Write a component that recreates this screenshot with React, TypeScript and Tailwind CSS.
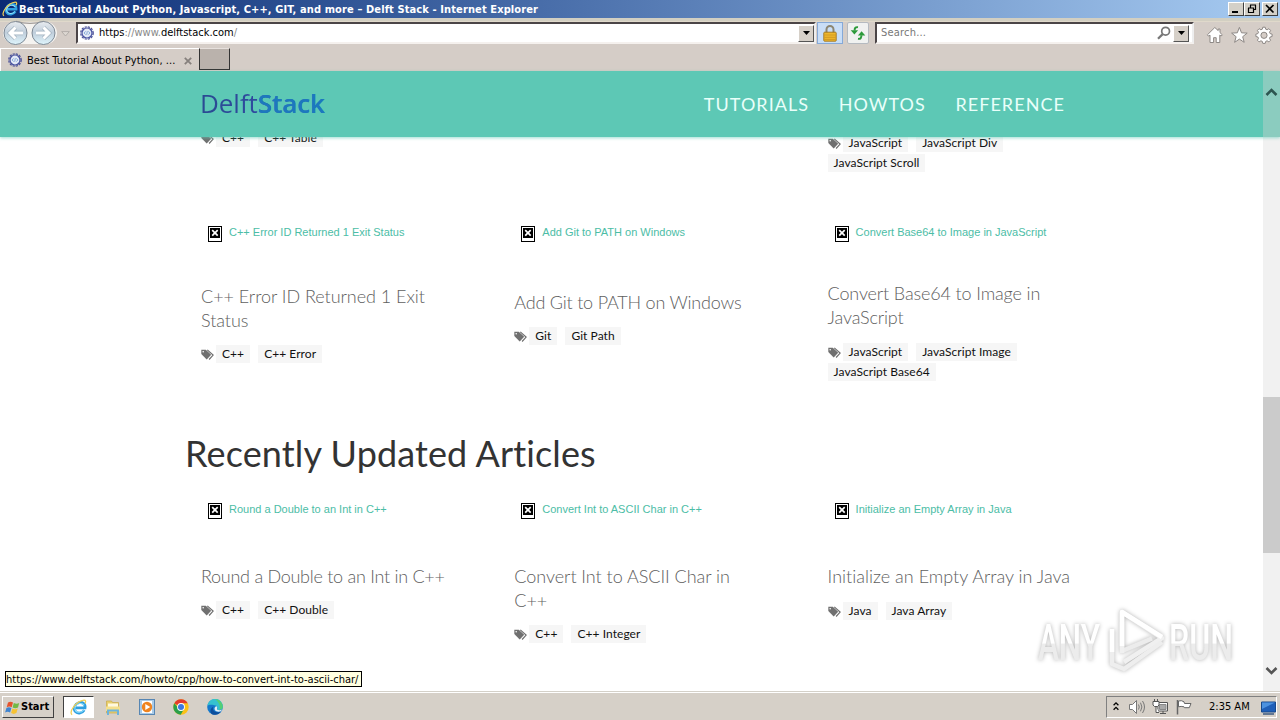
import type { ReactNode } from "react";

type CardData = {
  title?: string;
  lines: string[];
  tags: string[][];
  gap: string;
  tagGap: string;
  tracking?: string;
};

const FIRST_ROW: CardData[] = [
  { title: "C++ Error ID Returned 1 Exit Status", lines: ["C++ Error ID Returned 1 Exit", "Status"], tags: [["C++", "C++ Error"]], gap: "pt-[44px]", tagGap: "mt-[12px]" },
  { title: "Add Git to PATH on Windows", lines: ["Add Git to PATH on Windows"], tags: [["Git", "Git Path"]], gap: "pt-[50px]", tagGap: "mt-[12px]", tracking: "tracking-[-0.2px]" },
  { title: "Convert Base64 to Image in JavaScript", lines: ["Convert Base64 to Image in", "JavaScript"], tags: [["JavaScript", "JavaScript Image"], ["JavaScript Base64"]], gap: "pt-[41px]", tagGap: "mt-[13px]", tracking: "tracking-[-0.14px]" },
];

const SECOND_ROW: CardData[] = [
  { title: "Round a Double to an Int in C++", lines: ["Round a Double to an Int in C++"], tags: [["C++", "C++ Double"]], gap: "pt-[47px]", tagGap: "mt-[12px]", tracking: "tracking-[-0.27px]" },
  { title: "Convert Int to ASCII Char in C++", lines: ["Convert Int to ASCII Char in", "C++"], tags: [["C++", "C++ Integer"]], gap: "pt-[47px]", tagGap: "mt-[12px]" },
  { title: "Initialize an Empty Array in Java", lines: ["Initialize an Empty Array in Java"], tags: [["Java", "Java Array"]], gap: "pt-[47px]", tagGap: "mt-[13px]", tracking: "tracking-[0.01px]" },
];

function TagIcon() {
  return (
    <svg className="mr-[2px] h-[11px] w-[13px] shrink-0" viewBox="0 0 13 11">
      <path d="M.3.8h4.5l5.4 4.9-4.500 4.800-5.400-5.500z" fill="#707070" />
      <path d="M6.300.9l5.800 5.200-4 4.400" fill="none" stroke="#707070" strokeWidth="1.200" />
      <circle cx="2.200" cy="2.700" r=".8" fill="#fff" />
    </svg>
  );
}

function Tags({ rows }: { rows: string[][] }) {
  return (
    <div className="flex flex-col text-[12px] leading-[18px] text-[#111] tracking-[0.06px]">
      {rows.map((row, i) => (
        <div key={i} className="flex h-5 items-center">
          {i === 0 && <TagIcon />}
          {row.map((t) => (
            <span key={t} className="mr-2 h-[18px] bg-[#f6f6f6] px-[6px]">{t}</span>
          ))}
        </div>
      ))}
    </div>
  );
}

function Broken() {
  return (
    <svg className="h-4 w-[14px] shrink-0" viewBox="0 0 14 16">
      <path d="M0 0h14v16H0z" fill="#000" />
      <path d="M1 1h12v14H1z" fill="#fff" />
      <path d="M2 2h10v10H2z" fill="#000" />
      <path d="M4.2 4.2l5.5 5.4M9.7 4.2L4.2 9.6" stroke="#fff" strokeWidth="1.7" />
    </svg>
  );
}

function Card({ c }: { c: CardData }) {
  return (
    <div className="w-[313.3px] shrink-0">
      <div className="flex h-[23px] pl-[7px]">
        <div className="pt-[9px]"><Broken /></div>
        <a className="ml-[7px] whitespace-nowrap pt-[7px] font-['Liberation_Sans',sans-serif] text-[11px] leading-4 text-[#4cbda6]">{c.title}</a>
      </div>
      <div className={c.gap}>
        <h3 className={"text-[18px] font-light leading-6 text-[#606060] " + (c.tracking ?? "tracking-[-0.04px]")}>
          {c.lines.map((l) => <span key={l} className="block whitespace-nowrap">{l}</span>)}
        </h3>
      </div>
      <div className={c.tagGap}><Tags rows={c.tags} /></div>
    </div>
  );
}

function IeLogo({ className }: { className: string }) {
  return (
    <svg className={className} viewBox="0 0 20 20">
      <g transform="translate(2.200 0) skewX(-8)">
        <path d="M16.400 13A6.300 6.300 0 1 1 17 10.400H6" fill="none" stroke="#2f9fe0" strokeWidth="3.200" />
        <path d="M15.800 13A5.900 5.900 0 0 1 5 10.400 5.900 5.900 0 0 1 15.500 7.500" fill="none" stroke="#8fe0fd" strokeWidth="1.200" />
      </g>
      <path d="M2.400 18.600C-1.500 15 7 2.500 16.500 1.400c2.200-.1 2.200 1.800 1.200 4" fill="none" stroke="#f0cf58" strokeWidth="1.500" />
    </svg>
  );
}

function Favicon() {
  return (
    <svg className="h-[14px] w-[14px] shrink-0" viewBox="0 0 14 14">
      <circle cx="7" cy="7" r="6.200" fill="none" stroke="#4a5096" strokeWidth="1.300" strokeDasharray="2.200 1.050" />
      <circle cx="7" cy="7" r="5" fill="#e3e9f6" stroke="#4650a0" strokeWidth="1.200" />
      <path d="M5.600 5.400L4.100 7l1.500 1.600M8.400 5.400L9.900 7 8.400 8.600M7.300 5.200l-.6 3.600" fill="none" stroke="#7fa4d4" strokeWidth=".9" />
    </svg>
  );
}

function WinButton({ children, gap }: { children: ReactNode; gap?: boolean }) {
  return (
    <span className={"flex h-[14px] w-4 items-center justify-center border border-t-white border-l-white border-r-[#404040] border-b-[#404040] bg-[#d4d0c8] " + (gap ? "ml-[2px]" : "")}>
      <svg className="h-3 w-[14px]" viewBox="0 0 14 12" fill="none" stroke="#000">{children}</svg>
    </span>
  );
}

function TitleBar() {
  return (
    <div className="flex h-[18px] shrink-0 items-center bg-gradient-to-r from-[#0a2a74] to-[#a8ccf2] pr-[2px] pl-[2px]">
      <IeLogo className="h-4 w-4" />
      <span className="ml-px whitespace-nowrap pt-[2px] text-[11px] font-bold leading-4 tracking-[0.11px] text-white">
        Best Tutorial About Python, Javascript, C++, GIT, and more – Delft Stack - Internet Explorer
      </span>
      <div className="ml-auto flex">
        <WinButton><path d="M3 9h6" strokeWidth="2" /></WinButton>
        <WinButton><path d="M5 2h6M5.500 2v2.500M10.500 2v5M8.500 6.500H11M3 5h6M3.500 5v5M8.500 5v5M3 9.500h6" strokeWidth="1.200" /></WinButton>
        <WinButton gap><path d="M3 2l7.500 7.500M10.500 2L3 9.500" strokeWidth="1.700" /></WinButton>
      </div>
    </div>
  );
}

function DropButton() {
  return (
    <span className="flex h-[17px] w-4 shrink-0 items-center justify-center border border-t-white border-l-white border-r-[#555] border-b-[#555] bg-[#d6d0c8]">
      <svg className="h-1 w-[7px]" viewBox="0 0 7 4"><path d="M0 0h7L3.500 4z" fill="#000" /></svg>
    </span>
  );
}

function NavArrows() {
  return (
    <svg className="h-[26px] w-[58px] shrink-0" viewBox="0 0 58 26">
      <defs>
        <linearGradient id="orb" x1="0" y1="0" x2="0" y2="1">
          <stop offset="0" stopColor="#e9ecf0" /><stop offset=".48" stopColor="#c0cedb" /><stop offset="1" stopColor="#dff5fc" />
        </linearGradient>
      </defs>
      <rect x="2" y="2" width="54" height="22" rx="11" fill="#f5f3f0" />
      <path d="M15 1.300q14 4 28 0" fill="none" stroke="#a19b98" strokeWidth="1.200" />
      <g fill="url(#orb)" stroke="#75808c" strokeWidth=".9">
        <circle cx="14.500" cy="13" r="11.500" /><circle cx="42.500" cy="13" r="11.500" />
      </g>
      <g fill="none" stroke="#a3b3c0" strokeWidth="4.400">
        <path d="M22 13H9M14.500 7.500L9 13l5.500 5.500M35 13h13M42.500 7.500L48 13l-5.500 5.500" />
      </g>
      <g fill="none" stroke="#fff" strokeWidth="3">
        <path d="M22 13H9M14.500 7.500L9 13l5.500 5.500M35 13h13M42.500 7.500L48 13l-5.500 5.500" />
      </g>
    </svg>
  );
}

function Toolbar() {
  return (
    <div className="flex h-[29px] shrink-0 bg-[#d5cdc7] pl-px">
      <div className="mt-[-2px]"><NavArrows /></div>
      <svg className="mt-[9px] ml-[2px] h-[6px] w-[9px]" viewBox="0 0 9 6"><path d="M.7.6h7.6L4.5 5z" fill="#ddd8d2" stroke="#aaa5a0" strokeWidth=".8" /></svg>
      <div className="mt-0 ml-[6px] flex h-[22px] w-[740px] items-center border-2 border-t-[#4b4547] border-l-[#4b4547] border-r-[#eee] border-b-[#f5f1ee] bg-white pl-[2px]">
        <Favicon />
        <span className="ml-[5px] pt-px text-[11px] text-[#888]"><span className="text-black">https</span>://www.<span className="text-black">delftstack.com</span>/</span>
        <span className="ml-auto"><DropButton /></span>
      </div>
      <div className="mt-0 ml-px flex h-[22px] w-[26px] items-center justify-center border border-[#85a9d8] bg-[#c9def7]">
        <svg className="h-[17px] w-[14px]" viewBox="0 0 14 17">
          <path d="M3.500 8V4.500a3.500 3.500 0 0 1 7 0V8" fill="none" stroke="#8c8672" strokeWidth="2" />
          <rect x=".8" y="7.200" width="12.400" height="9" rx=".8" fill="#efb82d" stroke="#a2741a" strokeWidth=".9" />
          <path d="M1.500 10h11M1.500 12.300h11M1.500 14.400h11" stroke="#c58c1c" strokeWidth=".7" />
        </svg>
      </div>
      <div className="mt-0 ml-1 flex h-[22px] w-[22px] items-center justify-center rounded-[2px] border border-[#b5bac0] bg-[#f0f1f0]">
        <svg className="h-[14px] w-4" viewBox="0 0 16 14" fill="none" stroke="#2c9a3a" strokeWidth="2">
          <path d="M8 1.200C5.500.8 4.600 2 4.600 4.500" /><path d="M8 12.800c2.500.4 3.400-.8 3.400-3.500" />
          <path d="M.7 4.200h7.400L4.400 8.400zM7.900 9.400h7.400L11.600 5.200z" fill="#2c9a3a" stroke="none" />
        </svg>
      </div>
      <div className="mt-0 ml-[6px] flex h-[22px] w-[319px] items-center border-2 border-t-[#4b4547] border-l-[#4b4547] border-r-[#eee] border-b-[#f5f1ee] bg-white pr-[3px] pl-1">
        <span className="pt-px text-[11px] tracking-[0.2px] text-[#777]">Search...</span>
        <svg className="ml-auto mr-[2px] h-[14px] w-[14px]" viewBox="0 0 14 14" fill="none" stroke="#777">
          <circle cx="8.600" cy="5.200" r="3.900" strokeWidth="1.700" /><path d="M5.700 8.100L1 12.800" strokeWidth="2.200" />
        </svg>
        <DropButton />
      </div>
      <svg className="mt-[4px] ml-[12px] h-[18px] w-[68px]" viewBox="0 0 68 18" fill="#fff" stroke="#8d8885" strokeWidth="1">
        <path d="M8.800 1.500L1.400 8.800l1.200 1.300 1.400-1v7.400h3.600v-4.800h2.600v4.800h3.600V9.100l1.300 1 1.200-1.300-2.300-2.200V3h-1.800v1.600z" />
        <path d="M33.400 1.400l2.100 5.400 5.700.3-4.500 3.600 1.500 5.600-4.800-3.200-4.800 3.200 1.500-5.600-4.500-3.600 5.700-.3z" />
        <path fillRule="evenodd" d="M56.800 1.200h2.400l.5 2 1.400.6 1.800-1.100 1.700 1.700-1.100 1.800.6 1.400 2 .5v2.400l-2 .5-.6 1.400 1.100 1.800-1.700 1.700-1.800-1.100-1.400.6-.5 2h-2.400l-.5-2-1.400-.6-1.800 1.100-1.700-1.700 1.100-1.800-.6-1.400-2-.5V8.100l2-.5.6-1.400-1.100-1.800 1.700-1.700 1.800 1.100 1.400-.6zM58 6.200a3.100 3.100 0 1 0 0 6.200 3.100 3.100 0 0 0 0-6.200z" />
      </svg>
    </div>
  );
}

function TabRow() {
  return (
    <div className="flex h-[20px] shrink-0 bg-[#d5cdc7]">
      <div className="mt-[-3px] flex h-[23px] w-[199px] items-center border-t border-l border-white pt-px pr-[7px] pl-[7px]">
        <span className="mb-px flex"><Favicon /></span>
        <span className="ml-[5px] whitespace-nowrap pt-px text-[11px] text-black tracking-[0.05px]">Best Tutorial About Python, ...</span>
        <svg className="ml-auto h-2 w-2" viewBox="0 0 8 8"><path d="M.8.8l6.400 6.400M7.200.8L.8 7.200" stroke="#86807d" strokeWidth="1.800" /></svg>
      </div>
      <div className="mt-[-3px] h-[22px] w-[31px] border border-t-[#e6e0dc] border-l-[#333] border-r-[#333] border-b-[#333] bg-[#bab2ac]" />
    </div>
  );
}

function SiteHeader() {
  return (
    <header className="relative z-10 flex h-[66px] shrink-0 items-center bg-[#5dc8b5] pl-[200px] shadow-[0_1px_3px_rgba(93,200,181,0.6)]">
      <a className="bg-gradient-to-r from-[#2a4a92] via-[#304aa0] to-[#1b80c4] bg-clip-text pb-[3px] font-['Open_Sans',sans-serif] text-[26px] leading-9 text-transparent tracking-[-0.05px]">
        Delft<b className="font-semibold text-[#1c78be] tracking-[-0.1px]">Stack</b>
      </a>
      <nav className="ml-auto mr-[215px] flex gap-[29.5px] text-[18px] tracking-[1.060px] text-[#e9fffa]">
        <a>TUTORIALS</a><a>HOWTOS</a><a>REFERENCE</a>
      </nav>
      <div className="absolute top-0 right-0 h-full w-[17px] bg-[#8bccbf]" />
    </header>
  );
}

function Watermark() {
  return (
    <svg className="absolute top-[606px] left-[1030px] h-[68px] w-[210px] drop-shadow-[0_0_2px_rgba(0,0,0,0.3)]" viewBox="0 0 210 68">
      <defs>
        <linearGradient id="wm" x1="0" y1="0" x2="0" y2="1">
          <stop offset="0" stopColor="#fff" /><stop offset=".5" stopColor="#fff" /><stop offset=".52" stopColor="#ececec" /><stop offset="1" stopColor="#ececec" />
        </linearGradient>
      </defs>
      <g fill="url(#wm)" fontFamily="Roboto, sans-serif" fontSize="50" fontWeight="500">
        <text x="8" y="54" textLength="62" lengthAdjust="spacingAndGlyphs">ANY</text>
        <text x="139" y="54" textLength="64" lengthAdjust="spacingAndGlyphs">RUN</text>
      </g>
      <g fill="none" strokeWidth="4.500" strokeLinejoin="round">
        <path d="M92 16v29l30-12.500" stroke="#ececec" />
        <path d="M92 47V6l40 26-38 24" stroke="#f0f0f0" />
        <path d="M82 23v35l12 5 38-27" stroke="#eee" />
        <path d="M82 46V23M92 40V6l40 25" stroke="#fff" />
      </g>
    </svg>
  );
}

function Scrollbar() {
  return (
    <div className="absolute top-[71px] right-0 z-20 flex h-[620px] w-[17px] flex-col items-center">
      <svg className="mt-[16px] h-[10px] w-[13px]" viewBox="0 0 13 10"><path d="M1.500 8l5-5 5 5" fill="none" stroke="#2d5650" strokeWidth="2.600" /></svg>
      <div className="mt-[300px] h-[156px] w-full bg-[#cbcbcb]" />
      <svg className="mt-auto mb-[15px] h-[10px] w-[13px]" viewBox="0 0 13 10"><path d="M1.500 2l5 5 5-5" fill="none" stroke="#555" strokeWidth="2.600" /></svg>
    </div>
  );
}

function Taskbar() {
  return (
    <footer className="flex h-[29px] shrink-0 border-t border-[#d4d0c8] bg-[#d6d0c8] shadow-[inset_0_1px_0_#fff]">
      <button className="mt-[4px] ml-[2px] flex h-[22px] w-[52px] items-center border border-t-white border-l-white border-r-[#404040] border-b-[#404040] pl-[2px] text-[11px] font-bold">
        <svg className="mr-0 h-[15px] w-[16px] shrink-0" viewBox="0 0 16 15">
          <path d="M3 2.500q2.500-1.600 5 0L6.700 7.200q-2.500-1.600-5 0z" fill="#e5532d" />
          <path d="M8.800 2.900q3 1.600 5.400 0L13 7.500q-2.700 1.600-5.400 0z" fill="#73b944" />
          <path d="M1.400 8.100q2.500-1.600 5 0L5.100 12.600q-2.500-1.500-5 0z" fill="#3f84d0" />
          <path d="M7.400 8.500q2.700 1.500 5.300 0l-1.300 4.600q-2.700 1.600-5.300 0z" fill="#f6c233" />
        </svg>
        Start
      </button>
      <div className="mt-[4px] ml-[9px] flex h-[22px] w-[31px] items-center justify-center border border-t-[#404040] border-l-[#404040] border-r-white border-b-white bg-white">
        <IeLogo className="h-[17px] w-[17px]" />
      </div>
      <svg className="mt-[8px] ml-[11px] h-4 w-4" viewBox="0 0 16 16">
        <path d="M1.500 1h5l1 1.500h6V13h-12z" fill="#e9cf6d" stroke="#c8a94a" strokeWidth=".7" />
        <path d="M3 3.500h10V8H3z" fill="#fff9df" />
        <path d="M1 6.500h14V11H1z" fill="#f5e08d" />
        <path d="M3 15v-4.500h10V15" fill="none" stroke="#6cb3dc" strokeWidth="2" />
      </svg>
      <svg className="mt-[7px] ml-[18px] h-4 w-4" viewBox="0 0 16 16">
        <rect x=".5" y=".5" width="15" height="15" fill="#a9cbe8" stroke="#5786b3" />
        <rect x="3" y="2" width="10" height="12" fill="#fff" />
        <circle cx="8" cy="8" r="5.200" fill="#ef8420" /><path d="M6.300 5l5 3-5 3z" fill="#fff" />
      </svg>
      <svg className="mt-[7px] ml-[18px] h-4 w-4" viewBox="0 0 16 16">
        <circle cx="8" cy="8" r="7.700" fill="#fbc116" />
        <path d="M8 8L1.300 4.200A7.700 7.700 0 0 1 14.700 4.200L8 4.300z" fill="#e33b2e" />
        <path d="M1.300 4.200A7.700 7.700 0 0 0 7.700 15.700L11 10z M1.300 4.200L8 8v4z" fill="#2b9f4a" />
        <circle cx="8" cy="8" r="3.900" fill="#fff" /><circle cx="8" cy="8" r="3" fill="#3d78e0" />
      </svg>
      <svg className="mt-[7px] ml-[18px] h-4 w-4" viewBox="0 0 16 16">
        <circle cx="8" cy="8" r="7.800" fill="#1478cc" />
        <path d="M.4 7A7.700 7.700 0 0 1 15.800 8c0 3-3.300 3.700-5.800 2.500 1.500-2-.3-4.300-2.700-4.300C4.500 5.800 2 5.500.4 7z" fill="#35c1d0" />
        <path d="M8 .2a7.700 7.700 0 0 1 7.800 7.600c0 2-1.600 3-3.400 3C13.800 7.500 12 3 8 .2z" fill="#54cf75" />
        <path d="M6.500 7.500c-2 3 1 6.300 5.500 5.700l1.900-.7A7.800 7.800 0 0 1 5 15.200c-2.500-2-2-6 1.500-7.700z" fill="#0d4e9c" />
        <path d="M9 7c2 1 1 2.800 1 3.500 1.500 1 4 .8 5 0l-1 1.800c-3 1-6.500 0-6.500-2.600C7.500 8.400 8.500 8 9 7z" fill="#e2eef5" />
      </svg>
      <div className="mt-[4px] ml-auto mr-[3px] flex h-[22px] w-[171px] items-center border border-t-[#808080] border-l-[#808080] border-r-white border-b-white pl-[6px] text-[11px]">
        <svg className="h-[10px] w-[6px] mb-[2px]" viewBox="0 0 6 10"><path d="M.6 4.200L3 1.800l2.400 2.400M.6 8.700L3 6.300l2.400 2.400" fill="none" stroke="#000" strokeWidth="1.300" /></svg>
        <svg className="ml-[9px] h-4 w-[18px]" viewBox="0 0 18 16" fill="none" stroke="#777">
          <path d="M1.500 5.500h3l4-4v13l-4-4h-3z" fill="#fff" /><path d="M10.500 5.500q1.500 2.500 0 5M12.500 3.700q2.800 4.300 0 8.600M14.500 2q4 6 0 12" />
        </svg>
        <svg className="ml-[6px] h-4 w-[17px]" viewBox="0 0 17 16" fill="#fff" stroke="#555">
          <path d="M6 3.500h9.500V12H6z" fill="#fff" /><path d="M7.500 5.500h6.500v5H7.500z" fill="#a9a9a9" stroke="#888" /><path d="M8 14.500h6M11 12v2" />
          <path d="M1 2.500h6V6L5.500 7.500h-3L1 6zM2.500 0v2.500M5.500 0v2.500M4 7.500v6h3" />
        </svg>
        <svg className="ml-[7px] h-4 w-4" viewBox="0 0 16 16" fill="#fff" stroke="#666">
          <path d="M1.500 1v14.500" strokeWidth="1.500" /><path d="M2.500 2q3-1 5.500.8L8.500 4.500h6.500l-1.700 4.200H8.500L8 7.800q-3-.8-5.500 0z" />
        </svg>
        <span className="ml-[17px] whitespace-nowrap pt-px">2:35 AM</span>
        <svg className="mt-px ml-auto mr-0 h-[14px] w-[15px]" viewBox="0 0 15 14">
          <path d="M.5 1h14v10H.5z" fill="#1f5fb8" stroke="#184a8c" /><path d="M1 1.500h13L1 8z" fill="#4c92e0" /><path d="M2 13h11" stroke="#3b5a80" strokeWidth="1.500" />
        </svg>
      </div>
    </footer>
  );
}

export default function App() {
  return (
    <div className="relative flex h-[720px] w-[1280px] flex-col overflow-hidden bg-white font-['DejaVu_Sans_Condensed',sans-serif] [font-variant-ligatures:none]">
      <TitleBar />
      <div className="h-[4px] shrink-0 border-b border-[#e0d9cb] bg-[#d2cfc2]" />
      <Toolbar />
      <TabRow />
      <div className="flex h-[620px] shrink-0 flex-col font-['Lato',sans-serif]">
        <SiteHeader />
        <main className="flex h-[554px]">
          <div className="flex flex-1 flex-col overflow-hidden pl-[201px]">
            <div className="flex h-[80px] shrink-0">
              <div className="mt-[-9px] w-[626.6px]"><Tags rows={[["C++", "C++ Table"]]} /></div>
              <div className="mt-[-4px]"><Tags rows={[["JavaScript", "JavaScript Div"], ["JavaScript Scroll"]]} /></div>
            </div>
            <div className="flex h-[212px] shrink-0">{FIRST_ROW.map((c) => <Card key={c.title} c={c} />)}</div>
            <h2 className="ml-[-16px] h-[65px] shrink-0 text-[36px] leading-[48px] text-[#333] tracking-[0.130px]">Recently Updated Articles</h2>
            <div className="flex shrink-0">{SECOND_ROW.map((c) => <Card key={c.title} c={c} />)}</div>
          </div>
          <div className="w-[17px] bg-[#f1f1f1]" />
        </main>
      </div>
      <Taskbar />
      <Scrollbar />
      <Watermark />
      <div className="absolute top-[671px] left-[5px] h-4 w-[357px] whitespace-nowrap border border-black bg-[#ffffe1] pl-0 text-[11px] leading-[15px] text-black tracking-[-0.01px]">
        https://www.delftstack.com/howto/cpp/how-to-convert-int-to-ascii-char/
      </div>
    </div>
  );
}
